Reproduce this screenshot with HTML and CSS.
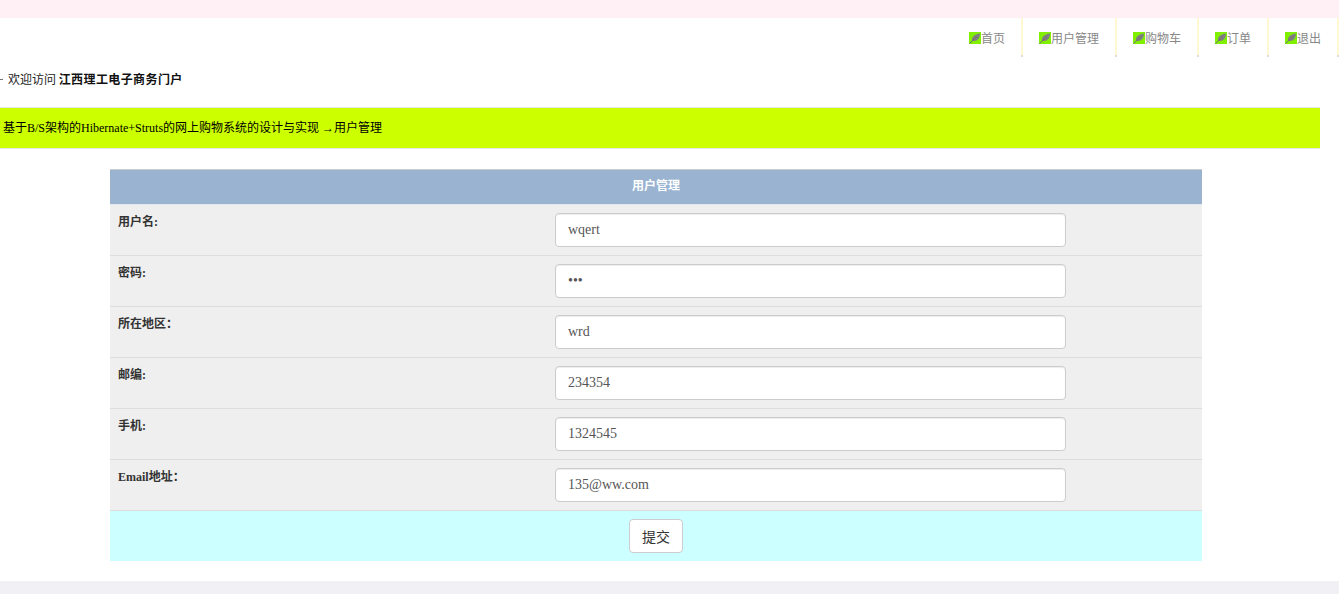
FILE: index.html
```html
<!DOCTYPE html>
<html lang="zh">
<head>
<meta charset="utf-8">
<title>用户管理</title>
<link rel="stylesheet" href="styles.css">
</head>
<body>
<svg class="sprite" width="0" height="0" aria-hidden="true"><defs>
<symbol id="leaf" viewBox="0 0 12 12"><rect width="12" height="12" fill="#80f000"/><path d="M3 8.5C2.5 4.5 6 2 11 1.5 11 6.500 8 9.500 3.500 9Z" fill="#808080"/><path d="M0.500 11.500L8 4.500" stroke="#707070" stroke-width="1" fill="none"/></symbol>
</defs></svg>
<div class="top-strip"></div>
<nav class="nav">
  <a class="tab" href="#"><svg class="ico"><use href="#leaf"/></svg>首页</a>
  <a class="tab" href="#"><svg class="ico"><use href="#leaf"/></svg>用户管理</a>
  <a class="tab" href="#"><svg class="ico"><use href="#leaf"/></svg>购物车</a>
  <a class="tab" href="#"><svg class="ico"><use href="#leaf"/></svg>订单</a>
  <a class="tab" href="#"><svg class="ico"><use href="#leaf"/></svg>退出</a>
</nav>
<p class="welcome"><span class="dot"></span>欢迎访问 <strong>江西理工电子商务门户</strong></p>
<div class="banner"><span class="mark"></span>基于B/S架构的Hibernate+Struts的网上购物系统的设计与实现 →用户管理</div>
<form class="panel">
  <div class="panel-head">用户管理</div>
  <div class="row"><label class="lbl">用户名:</label><input class="field" type="text" value="wqert"></div>
  <div class="row"><label class="lbl">密码:</label><input class="field" type="password" value="123"></div>
  <div class="row"><label class="lbl">所在地区：</label><input class="field" type="text" value="wrd"></div>
  <div class="row"><label class="lbl">邮编:</label><input class="field" type="text" value="234354"></div>
  <div class="row"><label class="lbl">手机:</label><input class="field" type="text" value="1324545"></div>
  <div class="row"><label class="lbl">Email地址：</label><input class="field" type="text" value="135@ww.com"></div>
  <div class="actions"><button class="submit" type="button">提交</button></div>
</form>
<div class="footer"></div>
</body>
</html>
```
FILE: styles.css
```css
* { box-sizing: border-box; }
html, body { margin: 0; padding: 0; }
body {
  width: 1339px;
  height: 594px;
  overflow: hidden;
  background: #fff;
  color: #222;
  font: 12px/18px "Liberation Serif", "Noto Sans CJK SC", serif;
}
.sprite { position: absolute; }
.top-strip { height: 18px; background: #fff0f5; }
.nav {
  display: flex;
  justify-content: flex-end;
  height: 39px;
  padding-right: 2px;
  gap: 2px;
}
.tab {
  position: relative;
  display: flex;
  align-items: center;
  justify-content: center;
  height: 39px;
  padding: 0 16px;
  color: #888;
  text-decoration: none;
  font-family: "Noto Sans CJK SC", sans-serif;
  font-size: 12px;
}
.tab::after {
  content: "";
  position: absolute;
  top: 0;
  right: -2px;
  bottom: 0;
  width: 2px;
  background: linear-gradient(#fff8d0 0 37px, #ddd 37px);
}
.ico { width: 12px; height: 12px; flex: none; }
.welcome {
  display: flex;
  align-items: center;
  height: 18px;
  margin: 13px 0 0;
  color: #222;
  font-family: "Noto Sans CJK SC", sans-serif;
  white-space: pre;
}
.welcome strong { font-weight: 700; color: #111; letter-spacing: .4px; }
.dot { width: 3px; height: 1px; background: #777; margin-right: 5px; }
.banner {
  display: flex;
  align-items: center;
  width: 1320px;
  height: 42px;
  margin-top: 19px;
  padding-left: 3px;
  background: #cf0;
  border-top: 1px solid #e6e6e6;
  border-bottom: 1px solid #e6e6e6;
  color: #000;
  white-space: pre;
}
.mark { display: none; }
.panel {
  width: 1092px;
  margin: 20px 0 0 110px;
  border-top: 1px solid #ccc;
}
.panel-head {
  height: 35px;
  background: #99b3d1;
  border-bottom: 1px solid #e3e8ee;
  color: #fff;
  font-weight: 700;
  line-height: 32px;
  text-align: center;
}
.row {
  display: grid;
  grid-template-columns: 445px 511px;
  height: 51px;
  padding-top: 8px;
  background: #efefef;
  border-bottom: 1px solid #ddd;
}
.lbl {
  padding: 0 0 0 8px;
  color: #333;
  font-weight: 700;
}
.field {
  width: 511px;
  height: 34px;
  padding: 0 12px;
  background: #fff;
  border: 1px solid #ccc;
  border-radius: 4px;
  box-shadow: inset 0 1px 1px rgba(0, 0, 0, .075);
  color: #555;
  font: 14px/20px "Liberation Serif", "Noto Sans CJK SC", serif;
  outline: none;
}
.actions {
  display: flex;
  justify-content: center;
  align-items: flex-start;
  height: 50px;
  padding-top: 8px;
  background: #cff;
}
.submit {
  width: 54px;
  height: 34px;
  padding: 0;
  background: #fff;
  border: 1px solid #ccc;
  border-radius: 4px;
  color: #333;
  font: 14px/20px "Noto Sans CJK SC", sans-serif;
}
.footer { height: 14px; margin-top: 20px; background: #f0f0f5; }
```
